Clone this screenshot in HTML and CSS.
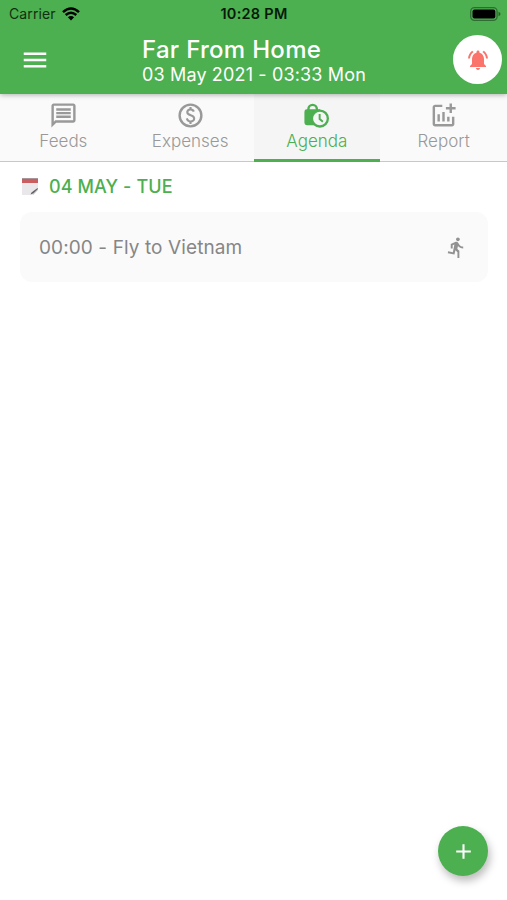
FILE: index.html
```html
<!DOCTYPE html>
<html lang="en">
<head>
<meta charset="utf-8">
<title>Far From Home</title>
<link rel="stylesheet" href="styles.css">
</head>
<body>
<header class="header">
  <div class="status">
    <div class="carrier"><span>Carrier</span>
      <svg class="wifi" viewBox="0 0 18 14"><path d="M1 5.2Q9-2.2 17 5.2M3.7 8Q9 3.4 14.3 8" fill="none" stroke="#000" stroke-width="2.5"/><path d="M5.9 10.2Q9 7.8 12.1 10.2L9 13.4Z"/></svg>
    </div>
    <div class="clock">10:28 PM</div>
    <svg class="battery" viewBox="0 0 31 14"><rect x=".7" y=".7" width="26.4" height="12.6" rx="3.8" fill="none" stroke="#000" stroke-opacity=".38" stroke-width="1.3"/><rect x="2.5" y="2.5" width="22.8" height="9" rx="2"/><path d="M28.5 4.7q2 .8 2 2.3t-2 2.3z" fill-opacity=".45"/></svg>
  </div>
  <div class="bar">
    <svg class="menu" viewBox="0 0 24 24"><path d="M3 18h18v-2H3zm0-5h18v-2H3zm0-7v2h18V6z"/></svg>
    <div class="heading">
      <h1 class="title">Far From Home</h1>
      <p class="subtitle">03 May 2021 - 03:33 Mon</p>
    </div>
    <button class="alert" aria-label="Alerts"><svg viewBox="0 0 24 24"><path d="M7.58 4.08 6.15 2.65C3.75 4.48 2.17 7.3 2.03 10.5h2c.15-2.65 1.51-4.97 3.55-6.42zm12.39 6.42h2c-.15-3.2-1.73-6.02-4.12-7.85l-1.42 1.43c2.02 1.45 3.39 3.77 3.54 6.42zM18 11c0-3.07-1.64-5.64-4.5-6.32V4c0-.83-.67-1.5-1.5-1.5s-1.5.67-1.5 1.5v.68C7.63 5.36 6 7.92 6 11v5l-2 2v1h16v-1l-2-2v-5zm-6 11c1.1 0 2-.9 2-2h-4c0 1.1.9 2 2 2z"/></svg></button>
  </div>
</header>
<nav class="tabs">
  <a class="tab">
    <svg viewBox="0 0 24 24"><path d="M4 4h16v12H5.17L4 17.17V4m0-2c-1.1 0-1.99.9-1.99 2L2 22l4-4h14c1.1 0 2-.9 2-2V4c0-1.1-.9-2-2-2H4zm2 10h12v2H6v-2zm0-3h12v2H6V9zm0-3h12v2H6V6z"/></svg>
    <span>Feeds</span>
  </a>
  <a class="tab">
    <svg viewBox="0 0 24 24"><circle cx="12" cy="12" r="9" fill="none" stroke="currentColor" stroke-width="2"/><path d="M12.89 11.1c-1.78-.59-2.64-.96-2.64-1.9 0-1.02 1.11-1.39 1.81-1.39 1.31 0 1.79.99 1.9 1.34l1.58-.67c-.15-.44-.82-1.91-2.66-2.23V5h-1.75v1.26c-2.6.56-2.62 2.85-2.62 2.96 0 2.27 2.25 2.91 3.35 3.31 1.58.56 2.28 1.07 2.28 2.03 0 1.13-1.05 1.61-1.98 1.61-1.82 0-2.34-1.87-2.4-2.09l-1.66.67c.63 2.19 2.28 2.78 3.02 2.96V19h1.75v-1.24c.52-.09 3.02-.59 3.02-3.22.01-1.39-.6-2.61-3-3.44z"/></svg>
    <span>Expenses</span>
  </a>
  <a class="tab active">
    <svg viewBox="0 0 24 24"><path d="M4 6.900h.3a4.500 4.700 0 0 1 9 0H15V20H4q-2 0-2-2V8.900q0-2 2-2zm2.300 0h5a2.500 2.700 0 0 0-5 0z"/><circle class="dial" cx="14.800" cy="14.500" r="6.600" stroke="currentColor" stroke-width="1.900"/><path d="M14.600 10.700v4.200l2.700 2.300" fill="none" stroke="currentColor" stroke-width="1.600"/></svg>
    <span>Agenda</span>
  </a>
  <a class="tab">
    <svg viewBox="0 0 24 24"><path d="M22 5v2h-3v3h-2V7h-3V5h3V2h2v3h3zm-3 14H5V5h6V3H5c-1.100 0-2 .9-2 2v14c0 1.100.9 2 2 2h14c1.100 0 2-.9 2-2v-6h-2v6zm-4-6v4h2v-4h-2zm-4 4h2V9h-2v8zm-2 0v-6H7v6h2z"/></svg>
    <span>Report</span>
  </a>
</nav>
<main class="content">
  <div class="day">
    <svg class="calendar" viewBox="0 0 18 19"><path d="M1 4h16v9l-5 5H1z" fill="#e9e7e9"/><path d="M12 18v-4l5-1z" fill="#c9c7ca"/><path d="M1 1.500h16V6H1z" fill="#c95d60"/><path d="M1 1h16v1H1z" fill="#a99497"/><path d="m9.500 17.500 1-2 6-4.500.5 1-5 4.500z" fill="#626265"/></svg>
    <h2 class="date">04 MAY - TUE</h2>
  </div>
  <article class="card">
    <span class="event">00:00 - Fly to Vietnam</span>
    <svg class="runner" viewBox="0 0 24 24"><path d="M13.490 5.480c1.100 0 2-.9 2-2s-.9-2-2-2-2 .9-2 2 .9 2 2 2zm-3.600 13.900 1-4.400 2.100 2v6h2v-7.500l-2.100-2 .6-3c1.300 1.500 3.300 2.500 5.500 2.500v-2c-1.900 0-3.500-1-4.300-2.400l-1-1.600c-.4-.6-1-1-1.700-1-.3 0-.5.1-.8.1l-5.200 2.200v4.700h2v-3.400l1.800-.7-1.600 8.100-4.900-1-.4 2 7 1.400z"/></svg>
  </article>
</main>
<button class="fab" aria-label="Add"><svg viewBox="0 0 24 24"><path d="M19 13h-6v6h-2v-6H5v-2h6V5h2v6h6z"/></svg></button>
</body>
</html>
```
FILE: styles.css
```css
* { box-sizing: border-box; }
body {
  margin: 0;
  height: 900px;
  overflow: hidden;
  background: #fff;
  font-family: Inter, "Liberation Sans", sans-serif;
}
h1, h2, p { margin: 0; }
button { border: 0; padding: 0; }
svg { display: block; }
.header {
  position: relative;
  z-index: 1;
  height: 94px;
  background: #4caf50;
  box-shadow: 0 1px 5px rgba(0, 0, 0, .3);
}
.status {
  display: grid;
  grid-template-columns: 1fr auto 1fr;
  align-items: center;
  height: 27px;
  padding: 0 6px 0 7px;
  font-size: 14px;
  color: #12300f;
}
.carrier { display: flex; align-items: center; gap: 6px; padding-left: 2px; letter-spacing: .1px; }
.wifi { width: 18px; height: 14px; }
.clock { font-weight: 600; font-size: 14.5px; letter-spacing: .25px; color: #071a08; }
.battery { width: 31px; height: 14px; justify-self: end; }
.bar {
  display: flex;
  align-items: center;
  height: 65px;
  padding: 0 5px 0 20px;
}
.menu { width: 30px; height: 30px; fill: #fff; }
.heading { flex: 1; padding: 2px 0 0 92px; color: #fff; white-space: nowrap; }
.title { font-size: 24px; line-height: 27px; font-weight: 500; letter-spacing: .3px; }
.subtitle { font-size: 18px; line-height: 23px; letter-spacing: .15px; }
.alert {
  display: grid;
  place-items: center;
  width: 49px;
  height: 49px;
  border-radius: 50%;
  background: #fff;
}
.alert svg { width: 24px; height: 24px; fill: #fa746b; }
.tabs {
  display: grid;
  grid-template-columns: repeat(4, 1fr);
  height: 68px;
  background: #fafafa;
  border-bottom: 1px solid #c8c8c8;
}
.tab {
  display: flex;
  flex-direction: column;
  align-items: center;
  height: 68px;
  padding-top: 7px;
  color: #999;
  font-size: 17px;
  line-height: 22px;
  font-weight: 300;
}
.tab svg { width: 29px; height: 29px; fill: currentColor; }
.tab.active { color: #4caf50; background: #f5f5f5; border-bottom: 3px solid #4caf50; }
.tab .dial { fill: #f5f5f5; }
.content { padding: 9px 19px 0 20px; }
.day { display: flex; align-items: center; gap: 10px; height: 31px; }
.calendar { width: 18px; height: 19px; margin-left: 1px; }
.date { font-size: 18px; line-height: 24px; font-weight: 500; letter-spacing: .1px; color: #4caf50; }
.card {
  display: flex;
  align-items: center;
  justify-content: space-between;
  height: 70px;
  margin-top: 10px;
  padding: 0 20px 0 19px;
  border-radius: 12px;
  background: #fafafa;
}
.event { font-size: 19px; letter-spacing: .1px; color: #868686; font-weight: 400; }
.runner { width: 23px; height: 23px; fill: #929292; }
.fab {
  position: absolute;
  right: 19px;
  bottom: 24px;
  display: grid;
  place-items: center;
  width: 50px;
  height: 50px;
  border-radius: 50%;
  background: #4caf50;
  box-shadow: 2px 5px 9px rgba(0, 0, 0, .27);
}
.fab svg { width: 25px; height: 25px; fill: #fff; }
```
